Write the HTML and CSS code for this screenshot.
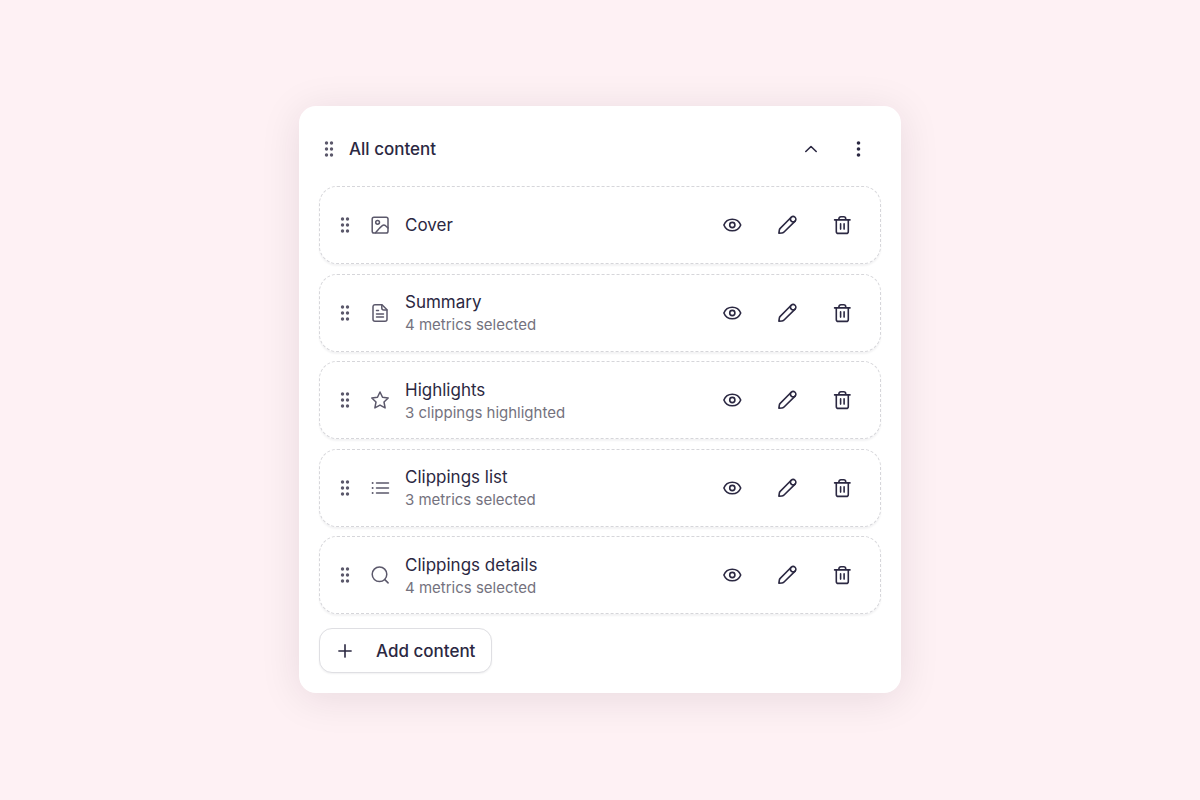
FILE: index.html
```html
<!DOCTYPE html>
<html lang="en">
<head>
<meta charset="utf-8">
<meta name="viewport" content="width=device-width, initial-scale=1">
<title>All content</title>
<link rel="stylesheet" href="styles.css">
</head>
<body>
<svg class="sprite" aria-hidden="true">
  <symbol id="grip" viewBox="0 0 20 20"><g fill="currentColor"><circle cx="7.500" cy="4" r="1.7"/><circle cx="12.500" cy="4" r="1.7"/><circle cx="7.500" cy="10" r="1.7"/><circle cx="12.500" cy="10" r="1.7"/><circle cx="7.500" cy="16" r="1.7"/><circle cx="12.500" cy="16" r="1.7"/></g></symbol>
  <symbol id="up" viewBox="0 0 20 20"><path d="M4.800 12.500 10 7.500l5.200 5"/></symbol>
  <symbol id="dots" viewBox="0 0 20 20"><g fill="currentColor" stroke="none"><circle cx="10.500" cy="4" r="1.8"/><circle cx="10.500" cy="10" r="1.8"/><circle cx="10.500" cy="16" r="1.8"/></g></symbol>
  <symbol id="eye" viewBox="0 0 20 20"><path d="M1.900 10C3.300 6.400 6.400 4.200 10.300 4.200S17.300 6.400 18.700 10C17.300 13.600 14.200 15.800 10.300 15.800S3.300 13.600 1.900 10Z"/><circle cx="10.300" cy="10" r="2.600"/></symbol>
  <symbol id="pencil" viewBox="0 0 20 20"><path d="M1.900 18.200 2.300 15.300a3 3 0 0 1 .9-1.900L14.200 2.300a2.700 2.700 0 0 1 3.900 3.800L6.800 17.200a3 3 0 0 1-1.900.8Z"/><path d="M14.200 2.300a2.700 2.700 0 0 0 3.900 3.800"/></symbol>
  <symbol id="trash" viewBox="0 0 20 20"><path d="M2.600 4.900h15.400M4.300 4.900v11.500a2 2 0 0 0 2 2h8a2 2 0 0 0 2-2V4.900M6.900 4.800V3.800a2 2 0 0 1 2-2h2.800a2 2 0 0 1 2 2v1M8.600 8.900v5.200M12.100 8.900v5.200"/></symbol>
  <symbol id="image" viewBox="0 0 20 20"><rect x="2.200" y="2.200" width="15.800" height="15.800" rx="1.800"/><circle cx="7.600" cy="7.300" r="1.900"/><path d="M5.500 17.800C7.500 15.500 9.500 12.900 12.300 10.700a2.600 2.600 0 0 1 3.200 0L18 12.900"/></symbol>
  <symbol id="doc" viewBox="0 0 20 20"><path d="M12 1.700H5a2 2 0 0 0-2 2v12.500a2 2 0 0 0 2 2h10a2 2 0 0 0 2-2V6.700Z"/><path d="M11.800 1.900v3a2 2 0 0 0 2 2h3M6.500 7.400h2M6.500 11h7M6.500 14h7"/></symbol>
  <symbol id="star" viewBox="0 0 20 20"><path d="m10 2 2.500 5.200 5.700.8-4.200 4 1.100 5.900L10 15.100l-5.100 2.800L6 12 1.800 8l5.700-.8Z"/></symbol>
  <symbol id="list" viewBox="0 0 20 20"><path d="M6.500 5h12M6.500 10h12M6.500 15h12"/><g fill="currentColor" stroke="none"><circle cx="2.600" cy="5" r="1"/><circle cx="2.600" cy="10" r="1"/><circle cx="2.600" cy="15" r="1"/></g></symbol>
  <symbol id="search" viewBox="0 0 20 20"><circle cx="9.500" cy="9.300" r="7.300"/><path d="m14.800 14.600 3.300 3.300"/></symbol>
  <symbol id="plus" viewBox="0 0 20 20"><path d="M10 3.900v12.200M3.900 10h12.200"/></symbol>
</svg>
<main class="panel">
  <header class="panel-header">
    <svg class="icon grip"><use href="#grip"/></svg>
    <h1 class="title panel-title">All content</h1>
    <div class="header-actions">
      <button class="icon-button" aria-label="Collapse"><svg class="icon"><use href="#up"/></svg></button>
      <button class="icon-button" aria-label="More options"><svg class="icon"><use href="#dots"/></svg></button>
    </div>
  </header>
  <ul class="list">
    <li class="row">
      <svg class="icon grip"><use href="#grip"/></svg>
      <svg class="icon kind"><use href="#image"/></svg>
      <div class="text"><h2 class="title">Cover</h2></div>
      <div class="actions">
        <button class="icon-button" aria-label="Preview Cover"><svg class="icon"><use href="#eye"/></svg></button>
        <button class="icon-button" aria-label="Edit Cover"><svg class="icon"><use href="#pencil"/></svg></button>
        <button class="icon-button" aria-label="Delete Cover"><svg class="icon"><use href="#trash"/></svg></button>
      </div>
    </li>
    <li class="row">
      <svg class="icon grip"><use href="#grip"/></svg>
      <svg class="icon kind"><use href="#doc"/></svg>
      <div class="text"><h2 class="title">Summary</h2><p class="note">4 metrics selected</p></div>
      <div class="actions">
        <button class="icon-button" aria-label="Preview Summary"><svg class="icon"><use href="#eye"/></svg></button>
        <button class="icon-button" aria-label="Edit Summary"><svg class="icon"><use href="#pencil"/></svg></button>
        <button class="icon-button" aria-label="Delete Summary"><svg class="icon"><use href="#trash"/></svg></button>
      </div>
    </li>
    <li class="row">
      <svg class="icon grip"><use href="#grip"/></svg>
      <svg class="icon kind"><use href="#star"/></svg>
      <div class="text"><h2 class="title">Highlights</h2><p class="note">3 clippings highlighted</p></div>
      <div class="actions">
        <button class="icon-button" aria-label="Preview Highlights"><svg class="icon"><use href="#eye"/></svg></button>
        <button class="icon-button" aria-label="Edit Highlights"><svg class="icon"><use href="#pencil"/></svg></button>
        <button class="icon-button" aria-label="Delete Highlights"><svg class="icon"><use href="#trash"/></svg></button>
      </div>
    </li>
    <li class="row">
      <svg class="icon grip"><use href="#grip"/></svg>
      <svg class="icon kind"><use href="#list"/></svg>
      <div class="text"><h2 class="title">Clippings list</h2><p class="note">3 metrics selected</p></div>
      <div class="actions">
        <button class="icon-button" aria-label="Preview Clippings list"><svg class="icon"><use href="#eye"/></svg></button>
        <button class="icon-button" aria-label="Edit Clippings list"><svg class="icon"><use href="#pencil"/></svg></button>
        <button class="icon-button" aria-label="Delete Clippings list"><svg class="icon"><use href="#trash"/></svg></button>
      </div>
    </li>
    <li class="row">
      <svg class="icon grip"><use href="#grip"/></svg>
      <svg class="icon kind"><use href="#search"/></svg>
      <div class="text"><h2 class="title">Clippings details</h2><p class="note">4 metrics selected</p></div>
      <div class="actions">
        <button class="icon-button" aria-label="Preview Clippings details"><svg class="icon"><use href="#eye"/></svg></button>
        <button class="icon-button" aria-label="Edit Clippings details"><svg class="icon"><use href="#pencil"/></svg></button>
        <button class="icon-button" aria-label="Delete Clippings details"><svg class="icon"><use href="#trash"/></svg></button>
      </div>
    </li>
  </ul>
  <button class="add"><svg class="icon"><use href="#plus"/></svg>Add content</button>
</main>
</body>
</html>
```
FILE: styles.css
```css
* { box-sizing: border-box; }
body {
  margin: 0;
  min-height: 100vh;
  display: grid;
  place-items: center;
  padding: 20px 20px 21px;
  background: #fef1f4;
  color: #2b2842;
  font-family: Inter, "Liberation Sans", sans-serif;
}
.sprite { position: absolute; width: 0; height: 0; }
.panel {
  width: 100%;
  max-width: 602px;
  padding: 20px;
  border-radius: 17px;
  background: #fff;
  box-shadow: 0 5px 40px rgba(40, 20, 35, 0.1);
}
.panel-header {
  display: flex;
  align-items: center;
  gap: 10px;
  min-height: 45px;
  margin-bottom: 15px;
  padding-right: 5px;
}
.header-actions { display: flex; gap: 11px; margin-left: auto; }
.icon {
  width: 20px;
  height: 20px;
  flex: none;
  fill: none;
  stroke: currentColor;
  stroke-width: 1.6;
  stroke-linecap: round;
  stroke-linejoin: round;
}
.grip { color: #5b586b; stroke: none; }
.kind { color: #5b586b; stroke-width: 1.5; }
.title { margin: 0; font-size: 17px; line-height: 24px; font-weight: 400; }
.panel-title { font-weight: 500; }
.note { margin: 0; font-size: 15px; line-height: 21px; color: #74727e; }
.list {
  display: flex;
  flex-direction: column;
  justify-content: space-between;
  min-height: 428px;
  margin: 0 0 14px;
  padding: 0;
  list-style: none;
}
.row {
  display: flex;
  align-items: center;
  gap: 15px;
  min-height: 78px;
  padding: 0 20px 0 15px;
  border: 1px dashed #d6d6da;
  border-radius: 18px;
  background: #fff;
  box-shadow: 0 2px 2px rgba(20, 20, 40, 0.05);
}
.text { flex: 1; }
.actions { display: flex; gap: 19px; }
.icon-button {
  display: grid;
  place-items: center;
  width: 36px;
  height: 36px;
  padding: 0;
  border: 0;
  background: none;
  color: inherit;
  cursor: pointer;
}
.add {
  display: flex;
  align-items: center;
  gap: 21px;
  min-height: 45px;
  padding: 0 16px 0 15px;
  border: 1px solid #dfdfe3;
  border-radius: 13px;
  background: #fff;
  box-shadow: 0 1px 2px rgba(20, 20, 40, 0.06);
  color: inherit;
  font: 500 17px/24px Inter, "Liberation Sans", sans-serif;
  cursor: pointer;
}
```
